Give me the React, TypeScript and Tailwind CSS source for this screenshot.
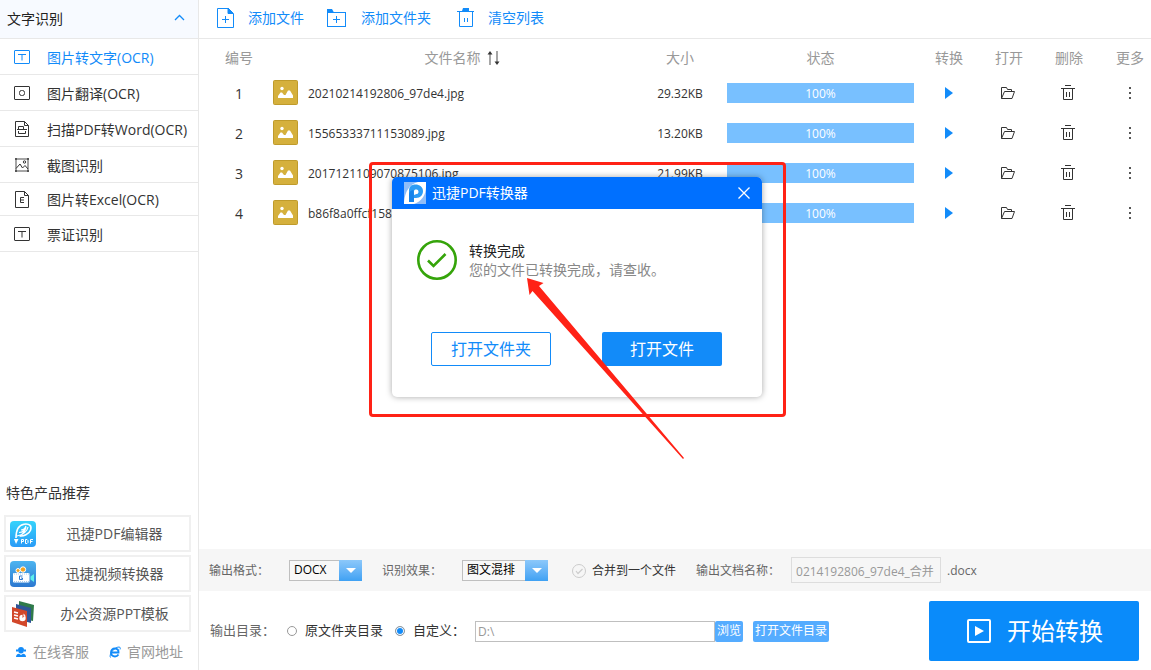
import React, { useState } from 'react';

type IconProps = { className?: string };

const MENU_ITEMS = [
  { name: '图片转文字(OCR)', iconName: 'Text', height: 'h-9' },
  { name: '图片翻译(OCR)', iconName: 'Translate', height: 'h-9' },
  { name: '扫描PDF转Word(OCR)', iconName: 'Scan', height: 'h-9' },
  { name: '截图识别', iconName: 'Capture', height: 'h-9' },
  { name: '图片转Excel(OCR)', iconName: 'Excel', height: 'h-[33px]' },
  { name: '票证识别', iconName: 'Text', height: 'h-9' },
];

const FILES = [
  { id: 1, name: '20210214192806_97de4.jpg', size: '29.32KB', progress: 100 },
  { id: 2, name: '15565333711153089.jpg', size: '13.20KB', progress: 100 },
  { id: 3, name: '2017121109070875106.jpg', size: '21.99KB', progress: 100 },
  { id: 4, name: 'b86f8a0ffcf158.jpg', size: '18.64KB', progress: 100 },
];

const PRODUCTS = [
  { name: '迅捷PDF编辑器', iconName: 'Editor' },
  { name: '迅捷视频转换器', iconName: 'Video' },
  { name: '办公资源PPT模板', iconName: 'Ppt' },
];

function MenuIcon({ iconName }: { iconName: string }) {
  const common = {
    width: 18,
    height: 18,
    viewBox: '0 0 18 18',
    fill: 'none',
    stroke: 'currentColor',
    className: 'shrink-0',
    'aria-hidden': true,
  };
  switch (iconName) {
    case 'Translate':
      return (
        <svg {...common}>
          <rect x="1.5" y="2.5" width="15" height="13" rx="0.5" />
          <rect x="6.5" y="6.5" width="5" height="5" rx="2" />
        </svg>
      );
    case 'Scan':
      return (
        <svg {...common}>
          <path d="M2.5 1.5h9l4 4v11h-13z" />
          <path d="M11.5 1.5v4h4" />
          <path d="M5.5 9V6.5h5V9M4 9.5h10M5.5 11v2.5h7V11" />
        </svg>
      );
    case 'Capture':
      return (
        <svg {...common}>
          <rect x="3" y="3" width="12" height="12" stroke="#888" strokeWidth="1.5" />
          <path d="M2 2h2v2H2zM14 2h2v2h-2zM2 14h2v2H2zM14 14h2v2h-2z" fill="#555" stroke="none" />
          <path d="M3 12.5L7 8l2.5 4L12 9.5l3 3.5" />
          <circle cx="11.5" cy="6" r="1.2" />
        </svg>
      );
    case 'Excel':
      return (
        <svg {...common}>
          <path d="M2.5 1.5h9l4 4v12h-13z" />
          <path d="M11.5 1.5v4h4" />
          <path d="M11 7.5H7.5v5H11M7.5 10H11" />
        </svg>
      );
    default:
      return (
        <svg {...common}>
          <rect x="1.5" y="2.5" width="15" height="13" rx="0.5" />
          <path d="M5 6.5h8M9 6.5v6" />
        </svg>
      );
  }
}

function ProductIcon({ iconName }: { iconName: string }) {
  switch (iconName) {
    case 'Editor':
      return (
        <svg width="26" height="26" viewBox="0 0 26 26" fill="none" className="shrink-0" aria-hidden="true">
          <defs>
            <linearGradient id="editor-bg" x1="0" y1="0" x2="0" y2="1">
              <stop offset="0" stopColor="#35d3fb" />
              <stop offset="1" stopColor="#2a9bf7" />
            </linearGradient>
          </defs>
          <rect width="26" height="26" rx="4" fill="url(#editor-bg)" />
          <path d="M6 17C6 9 9 4 14 3.200c6-.8 8 2 6.500 6-1.500 4-7 6.500-11 5.500" stroke="#fff" strokeWidth="1.600" />
          <path d="M7 15c5-1 10-4 11-9M9 11.500c4 0 6-2 7-5.500M11 9c2 0 4-1 5-4M10 15c3-2 5-5 6-9" stroke="#fff" strokeWidth="1.200" />
          <path d="M4 18h4.500L6 23z" fill="#fff" />
          <path d="M11.500 22.500v-4h2v2h-2M15.500 18.500v4h1.500l1-1v-2l-1-1zM20.500 22.500v-4h2.500M20.500 20.500h2" stroke="#fff" />
        </svg>
      );
    case 'Video':
      return (
        <svg width="26" height="26" viewBox="0 0 26 26" fill="none" className="shrink-0" aria-hidden="true">
          <defs>
            <linearGradient id="video-bg" x1="0" y1="0" x2="0" y2="1">
              <stop offset="0" stopColor="#4cb4f0" />
              <stop offset="1" stopColor="#2c78d0" />
            </linearGradient>
          </defs>
          <rect width="26" height="26" rx="4" fill="url(#video-bg)" />
          <circle cx="8" cy="9.500" r="2" fill="#f6a21c" stroke="#fff" />
          <circle cx="13" cy="8.500" r="2.700" fill="#f6a21c" stroke="#fff" />
          <rect x="3" y="12" width="16.500" height="9.500" rx="1" fill="#fff" />
          <path d="M4 13h15M4 20.500h15" stroke="#a8cdf0" strokeDasharray="1 1" />
          <path d="M12.500 15h-3v3.500h3V17H11" stroke="#2c78d0" />
          <path d="M20.500 15.500L24 13v8l-3.500-2.500z" fill="#5df0ea" />
        </svg>
      );
    default:
      return (
        <svg width="26" height="26" viewBox="0 0 26 26" fill="none" className="shrink-0" aria-hidden="true">
          <path d="M9 0l15 4-1 16-14-3z" fill="#2f7a4a" />
          <path d="M6 3l15 4v15L6 18z" fill="#2e5597" />
          <path d="M2 6l15 4v16L2 21z" fill="#d2472a" />
          <path d="M4 11l4 1M4 14l4 1M4 17l4 1" stroke="#fff" strokeWidth="1.300" />
          <circle cx="12.500" cy="17" r="3.200" fill="#fff" />
          <path d="M12.500 17V13l3 1z" fill="#d2472a" />
          <path d="M13.500 15.500v-3l2 2z" fill="#fff" />
        </svg>
      );
  }
}

function SortIcon({ className }: IconProps) {
  return (
    <svg width="13" height="14" viewBox="0 0 13 14" className={className} aria-hidden="true">
      <path d="M3 2v12" stroke="#888" strokeWidth="1.5" />
      <path d="M3 0l2.500 3.500h-5z" fill="#333" />
      <path d="M10 0v12" stroke="#888" strokeWidth="1.5" />
      <path d="M10 14l2.500-3.500h-5z" fill="#333" />
    </svg>
  );
}

function ImageFileIcon() {
  return (
    <svg width="25" height="26" viewBox="0 0 25 26" className="shrink-0" aria-hidden="true">
      <rect x="0.5" y="0.5" width="24" height="24" rx="1" fill="#d5b03c" stroke="#bf9b2b" />
      <circle cx="9" cy="8.5" r="1.700" fill="#fff" />
      <path d="M5 18v-2l2.500-3.500h1.500L11 15h1.500L15 10.500h2l3 5V18z" fill="#fff" />
    </svg>
  );
}

function FolderIcon() {
  return (
    <svg width="15" height="14" viewBox="0 0 15 14" fill="none" stroke="#333" className="mx-auto" aria-hidden="true">
      <path d="M0.5 12.5v-11h5l1 2h4v2" />
      <path d="M0.5 12.5l3-7h10l-2.500 7z" />
    </svg>
  );
}

function TrashIcon() {
  return (
    <svg width="14" height="16" viewBox="0 0 14 16" fill="none" stroke="#333" className="mx-auto" aria-hidden="true">
      <path d="M4 0.5h6M0 3.5h14M2.5 3.5v11h9v-11M5.5 7v5M8.5 7v5" />
    </svg>
  );
}

function AddFileIcon() {
  return (
    <svg width="22" height="22" viewBox="0 0 22 22" fill="none" stroke="#128bf9" aria-hidden="true">
      <path d="M14 1.500H3.500v19h16V7" />
      <path d="M14 1v5.500h5.500z" fill="#128bf9" />
      <path d="M8 12.500h7M11.500 9v7" />
    </svg>
  );
}

function AddFolderIcon() {
  return (
    <svg width="22" height="22" viewBox="0 0 22 22" fill="none" stroke="#128bf9" aria-hidden="true">
      <rect x="0.5" y="5.5" width="18" height="14" />
      <path d="M0 2h5l2 3.500H0z" fill="#128bf9" stroke="none" />
      <path d="M6 12.500h7M9.500 9v7" />
    </svg>
  );
}

function ClearIcon() {
  return (
    <svg width="22" height="22" viewBox="0 0 22 22" fill="none" stroke="#128bf9" aria-hidden="true">
      <path d="M3 4.500h17M5.500 4.500v15h13v-15M10.500 11v4M13.500 11v4" />
      <path d="M9 1h6v3H8z" fill="#128bf9" stroke="none" />
    </svg>
  );
}

function BrandIcon() {
  return (
    <svg width="22" height="22" viewBox="0 0 22 22" fill="none" aria-hidden="true">
      <rect width="22" height="22" fill="#8fbdf8" />
      <path d="M0 20C1 9 6 2 14 0h8v4c0 9-4 15-12 18H0z" fill="#fff" />
      <path d="M5 20V9c0-4.500 2.500-6.500 6.500-6.500S19 5 19 9s-2.500 7-7 7h-2v4z" fill="#2d9df5" />
      <path d="M10 13V9.500c0-1.500.8-2 2-2s2.500.5 2.500 2.200S13.500 12 12.500 12z" fill="#fff" />
      <path d="M5 20v-7c0-3 1.500-4.500 4.500-5L10 16v4z" fill="#1683ea" />
    </svg>
  );
}

function SelectBox({ id, options, className }: { id: string; options: string[]; className: string }) {
  return (
    <div className={`relative h-[21px] shrink-0 ${className}`}>
      <select
        id={id}
        className="h-full w-full appearance-none border border-[#bfbfbf] bg-[#f8f8f8] pl-1 pr-6 text-black outline-none"
      >
        {options.map((option) => (
          <option key={option}>{option}</option>
        ))}
      </select>
      <span className="pointer-events-none absolute right-0 top-0 flex h-full w-[23px] items-center justify-center bg-linear-to-b from-[#8cc8fa] to-[#3ea1f3]">
        <svg width="10" height="5" viewBox="0 0 10 5" aria-hidden="true">
          <path d="M0 0h10L5 5z" fill="#fff" />
        </svg>
      </span>
    </div>
  );
}

function Sidebar() {
  const [active, setActive] = useState(0);

  return (
    <aside className="flex w-[199px] shrink-0 flex-col border-r border-[#e8e8e8]">
      <button className="flex h-[39px] items-center justify-between border-b border-[#e8e8e8] bg-[#f7faff] pl-[7px] pr-[13px] text-sm text-[#222]">
        文字识别
        <svg width="11" height="11" viewBox="0 0 11 11" fill="none" aria-hidden="true">
          <path d="M1 6l4.500-4.500L10 6" stroke="#128bf9" strokeWidth="1.300" />
        </svg>
      </button>

      <nav>
        {MENU_ITEMS.map((item, index) => (
          <button
            key={item.name}
            onClick={() => setActive(index)}
            className={`flex w-full items-center gap-4 whitespace-nowrap border-b border-[#e8e8e8] pl-[13px] text-sm ${item.height} ${
              active === index ? 'text-[#128bf9]' : 'text-[#333]'
            }`}
          >
            <MenuIcon iconName={item.iconName} />
            <span className="pt-0.5">{item.name}</span>
          </button>
        ))}
      </nav>

      {/* Recommended products */}
      <div className="mt-auto pb-2">
        <h2 className="mb-3 pl-1.5 text-sm text-[#333]">特色产品推荐</h2>
        <div className="flex flex-col gap-[3px] pl-1 pr-[7px]">
          {PRODUCTS.map((product) => (
            <a
              key={product.name}
              href="#"
              className="flex h-[37px] items-center border-2 border-[#f0f0f0] pl-1 text-sm text-[#555]"
            >
              <ProductIcon iconName={product.iconName} />
              <span className="flex-1 pl-1 text-center">{product.name}</span>
            </a>
          ))}
        </div>
        <div className="mt-2.5 flex gap-5 pl-[15px] text-sm text-[#999]">
          <a href="#" className="flex items-center gap-1.5">
            <svg width="12" height="12" viewBox="0 0 12 12" fill="#128bf9" aria-hidden="true">
              <path d="M6 1c2 0 3 1.300 3 3s-1 3.500-3 3.500S3 5.700 3 4s1-3 3-3z" />
              <path d="M1 3.500h2v2H1zM9 3.500h2v2H9zM1 11c0-2 1-3 3-3.200L6 9l2-1.200c2 .2 3 1.200 3 3.200z" />
            </svg>
            在线客服
          </a>
          <a href="#" className="flex items-center gap-1.5">
            <svg width="12" height="12" viewBox="0 0 12 12" fill="none" stroke="#128bf9" aria-hidden="true">
              <path d="M9.500 8.500C8.500 10 7.500 10.500 6 10.500c-2.500 0-4-1.800-4-4s1.500-4 4-4 3.700 1.800 3.500 4H3" strokeWidth="1.900" />
              <path d="M1.500 11.500C-.5 9 5 1 10 1c1.500 0 1.500 1.500 1 2.500" />
            </svg>
            官网地址
          </a>
        </div>
      </div>
    </aside>
  );
}

function FileTable() {
  return (
    <table className="w-full table-fixed">
      <colgroup>
        <col className="w-[74px]" />
        <col />
        <col className="w-[58px]" />
        <col className="w-[210px]" />
        <col className="w-[60px]" />
        <col className="w-[60px]" />
        <col className="w-[60px]" />
        <col className="w-[52px]" />
      </colgroup>
      <thead className="text-sm text-[#999]">
        <tr className="h-[34px] *:pt-1 *:font-normal">
          <th className="pl-1.5">编号</th>
          <th>
            <span className="flex items-center justify-center gap-1.5">
              文件名称
              <SortIcon />
            </span>
          </th>
          <th>大小</th>
          <th className="pl-[18px] pr-[5px]">状态</th>
          <th>转换</th>
          <th>打开</th>
          <th>删除</th>
          <th className="pl-2.5">更多</th>
        </tr>
      </thead>
      <tbody className="text-xs text-[#333]">
        {FILES.map((file) => (
          <tr key={file.id} className="h-10 text-center">
            <td className="pl-1.5 pt-0.5 text-sm">{file.id}</td>
            <td>
              <span className="flex items-center gap-2.5">
                <ImageFileIcon />
                <span className="pt-0.5">{file.name}</span>
              </span>
            </td>
            <td className="pt-0.5">{file.size}</td>
            <td className="pl-[18px] pr-[5px]">
              <div className="relative h-5 bg-[#e5f2ff]">
                <div className="h-full bg-[#78c0ff]" style={{ width: `${file.progress}%` }} />
                <span className="absolute inset-0 flex items-center justify-center pt-0.5 text-white">
                  {file.progress}%
                </span>
              </div>
            </td>
            <td>
              <button aria-label="转换" className="block w-full">
                <svg width="8" height="12" viewBox="0 0 8 12" className="mx-auto" aria-hidden="true">
                  <path d="M0 0l8 6-8 6z" fill="#128bf9" />
                </svg>
              </button>
            </td>
            <td>
              <button aria-label="打开" className="block w-full pr-0.5">
                <FolderIcon />
              </button>
            </td>
            <td>
              <button aria-label="删除" className="block w-full pr-0.5">
                <TrashIcon />
              </button>
            </td>
            <td className="pl-2.5">
              <button aria-label="更多" className="block w-full">
                <svg width="2" height="12" viewBox="0 0 2 12" className="mx-auto" aria-hidden="true">
                  <path d="M0 0h2v2H0zM0 5h2v2H0zM0 10h2v2H0z" fill="#555" />
                </svg>
              </button>
            </td>
          </tr>
        ))}
      </tbody>
    </table>
  );
}

function OutputOptions() {
  return (
    <div className="flex h-[42px] items-center whitespace-nowrap bg-[#f6f6f6] pl-2.5 text-xs text-[#666]">
      <label htmlFor="output-format" className="w-20 shrink-0 pt-0.5">输出格式：</label>
      <SelectBox id="output-format" options={['DOCX', 'TXT']} className="w-[73px]" />
      <label htmlFor="output-effect" className="ml-5 w-20 shrink-0 pt-0.5">识别效果：</label>
      <SelectBox id="output-effect" options={['图文混排', '纯文字']} className="w-[86px]" />
      <label className="ml-6 flex items-center gap-1.5 pt-0.5 text-[#333]">
        <span className="relative flex h-3.5 w-3.5">
          <input type="checkbox" className="h-3.5 w-3.5 appearance-none rounded-full border border-[#ccc] checked:border-[#128bf9]" />
          <svg viewBox="0 0 14 14" fill="none" className="pointer-events-none absolute inset-0" aria-hidden="true">
            <path d="M4 7l2 2.500L10.500 5" stroke="#ccc" strokeWidth="1.200" />
          </svg>
        </span>
        合并到一个文件
      </label>
      <label htmlFor="output-name" className="ml-5 w-[95px] shrink-0 pt-0.5">输出文档名称：</label>
      <input
        id="output-name"
        defaultValue="0214192806_97de4_合并"
        className="mr-1.5 h-[26px] w-[150px] border border-[#ddd] bg-transparent px-1 pt-0.5 text-[#999] outline-none"
      />
      <span className="pt-0.5">.docx</span>
    </div>
  );
}

function OutputBar() {
  const radio =
    'h-2.5 w-2.5 appearance-none rounded-full border border-[#999] bg-white checked:bg-[#128bf9] checked:shadow-[inset_0_0_0_1px_#fff]';

  return (
    <div className="flex items-center whitespace-nowrap pb-[9px] pl-[11px] pr-3 pt-2.5 text-[13px] text-[#333]">
      <span className="w-[77px] shrink-0 text-[#666]">输出目录：</span>
      <label className="mr-3 flex items-center gap-2">
        <input type="radio" name="target" className={radio} />
        原文件夹目录
      </label>
      <label className="flex items-center gap-2">
        <input type="radio" name="target" defaultChecked className={radio} />
        自定义：
      </label>
      <input
        aria-label="输出目录"
        defaultValue="D:\"
        className="ml-2.5 h-[21px] w-60 border border-[#bfbfbf] px-0.5 text-xs text-[#999] outline-none"
      />
      <button className="h-[21px] rounded-xs bg-[#55acff] px-0.5 text-xs text-white">浏览</button>
      <button className="ml-2.5 h-[21px] rounded-xs bg-[#55acff] px-0.5 text-xs text-white">打开文件目录</button>
      <button className="ml-auto flex h-[60px] w-[210px] items-center justify-center gap-4 rounded-xs bg-[#0a8bfa] pl-0.5 text-2xl text-white">
        <svg width="24" height="24" viewBox="0 0 24 24" fill="none" aria-hidden="true">
          <rect x="1" y="1" width="22" height="22" rx="1" stroke="#fff" strokeWidth="2" />
          <path d="M8 7l9 5-9 5z" fill="#fff" />
        </svg>
        开始转换
      </button>
    </div>
  );
}

function DoneDialog({ onClose }: { onClose: () => void }) {
  return (
    <div className="absolute left-[369px] top-[162px] rounded-sm border-[3px] border-[#ff2216] pb-[17px] pl-5 pr-[21px] pt-3">
      <div
        role="dialog"
        aria-label="转换完成"
        className="w-[370px] overflow-hidden rounded-[5px] bg-white shadow-[0_0_6px_rgba(0,0,0,0.35)]"
      >
        <div className="flex h-8 items-center gap-1.5 bg-[#0070ff] px-3 text-sm text-white">
          <BrandIcon />
          迅捷PDF转换器
          <button aria-label="关闭" onClick={onClose} className="ml-auto">
            <svg width="12" height="12" viewBox="0 0 12 12" aria-hidden="true">
              <path d="M0.5 0.5l11 11M11.5 0.5l-11 11" stroke="#fff" strokeWidth="1.300" />
            </svg>
          </button>
        </div>
        <div className="flex items-center gap-3 pl-[25px] pt-[31px]">
          <svg width="40" height="40" viewBox="0 0 40 40" fill="none" stroke="#35a40a" aria-hidden="true">
            <circle cx="20" cy="20" r="18.700" strokeWidth="2.600" />
            <path d="M11 20.500l5.500 5.500L28.500 14" strokeWidth="2.600" />
          </svg>
          <div className="text-sm leading-[19px]">
            <p className="text-[#222]">转换完成</p>
            <p className="text-[#888]">您的文件已转换完成，请查收。</p>
          </div>
        </div>
        <div className="flex justify-between pb-[31px] pl-[39px] pr-10 pt-[52px] text-base">
          <button className="h-[34px] w-[120px] rounded-xs border border-[#128bf9] text-[#128bf9]">打开文件夹</button>
          <button className="h-[34px] w-[120px] rounded-xs bg-[#128bf9] text-white">打开文件</button>
        </div>
      </div>

      {/* Pointer to the result message */}
      <svg
        width="158"
        height="182"
        viewBox="0 0 158 182"
        className="pointer-events-none absolute left-[154px] top-[112px]"
        aria-hidden="true"
      >
        <path d="M1 1L17.500 6L13 9L158 181L157 182L6.500 14L3.500 18z" fill="#ff2216" />
      </svg>
    </div>
  );
}

export default function App() {
  const [showDialog, setShowDialog] = useState(true);

  return (
    <div className="relative flex min-h-screen bg-white font-['Open_Sans','Noto_Sans_CJK_SC',sans-serif]">
      <Sidebar />

      <main className="flex min-w-0 flex-1 flex-col">
        {/* Toolbar */}
        <div className="flex h-[39px] items-center gap-[23px] border-b border-[#e8e8e8] pb-0.5 pl-[15px] text-sm text-[#128bf9]">
          <button className="flex items-center gap-3">
            <AddFileIcon />
            添加文件
          </button>
          <button className="flex items-center gap-3">
            <AddFolderIcon />
            添加文件夹
          </button>
          <button className="flex items-center gap-3">
            <ClearIcon />
            清空列表
          </button>
        </div>

        <div className="flex-1">
          <FileTable />
        </div>

        <OutputOptions />
        <OutputBar />
      </main>

      {showDialog && <DoneDialog onClose={() => setShowDialog(false)} />}
    </div>
  );
}
